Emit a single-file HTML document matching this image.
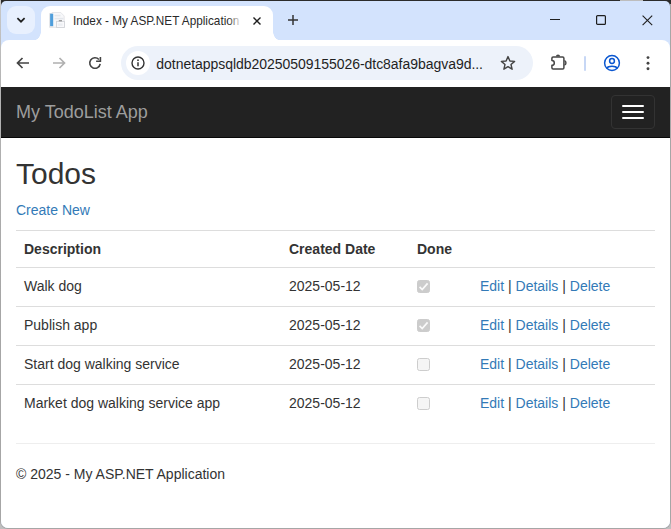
<!DOCTYPE html>
<html>
<head>
<meta charset="utf-8">
<title>Index - My ASP.NET Application</title>
<style>
*{box-sizing:border-box;}
html,body{margin:0;padding:0;}
body{width:671px;height:529px;overflow:hidden;background:#bfbfbf;font-family:"Liberation Sans",sans-serif;position:relative;}
#top{position:absolute;left:1px;top:0;width:670px;height:6px;background:#2b2b2b;}
#top i{position:absolute;left:619px;top:0;width:23px;height:1px;background:#bdbdbd;}
#ring{position:absolute;left:0;top:4px;width:671px;height:525px;border:1px solid #a6a6a6;border-top:0;border-radius:0 0 8px 8px;}
#lcol{position:absolute;left:0;top:0;width:1px;height:300px;background:linear-gradient(#c8c8c8,#b4b4b4 28%,#a6a6a6);}
#win{position:absolute;left:1px;top:1px;width:669px;height:527px;background:#d3e3fd;border-radius:5px 5px 7px 7px;overflow:hidden;}
/* tab strip */
#tabsearch{position:absolute;left:6px;top:5px;width:28px;height:28px;border-radius:9px;background:#e8f0fe;}
#tab{position:absolute;left:40px;top:5px;width:232px;height:35px;background:#fff;border-radius:9px 9px 0 0;}
#tab:before,#tab:after{content:"";position:absolute;bottom:0;width:9px;height:9px;}
#tab:before{left:-9px;background:radial-gradient(circle at 0 0,rgba(255,255,255,0) 8.5px,#fff 9px);}
#tab:after{right:-9px;background:radial-gradient(circle at 100% 0,rgba(255,255,255,0) 8.5px,#fff 9px);}
#tabtitle{position:absolute;left:32px;top:5.5px;width:189px;height:18px;font-size:13.3px;line-height:18px;color:#2a2a2a;white-space:nowrap;overflow:hidden;transform:scaleX(0.885);transform-origin:0 0;}
#tabfade{position:absolute;left:187px;top:5px;width:14px;height:22px;background:linear-gradient(90deg,rgba(255,255,255,0),#fff);}
/* toolbar */
#toolbar{position:absolute;left:0;top:39px;width:669px;height:47px;background:#fff;border-radius:8px 8px 0 0;}
#omni{position:absolute;left:120px;top:6px;width:411.5px;height:34px;border-radius:17px;background:#edf2fa;}
#chip{position:absolute;left:5px;top:5px;width:24px;height:24px;border-radius:12px;background:#fff;}
#url{position:absolute;left:35.3px;top:8.5px;font-size:14px;line-height:18px;color:#1f1f1f;white-space:nowrap;letter-spacing:-0.04px;}
svg{position:absolute;overflow:visible;}
/* page */
#page{position:absolute;left:0;top:86px;width:669px;height:442px;background:#fff;overflow:hidden;font-size:14px;line-height:20px;color:#333;}
#nav{position:absolute;left:0;top:0;width:669px;height:51px;background:#222;border-bottom:1px solid #080808;}
#brand{position:absolute;left:15px;top:15px;font-size:18px;line-height:20px;color:#9d9d9d;white-space:nowrap;}
#toggle{position:absolute;left:610px;top:8px;width:44px;height:34px;border:1px solid #333;border-radius:4px;}
#toggle i{position:absolute;left:10px;width:22px;height:2px;border-radius:1px;background:#fff;}
h2{position:absolute;left:15px;top:70px;margin:0;font-size:30px;line-height:33px;font-weight:normal;color:#333;}
a{color:#337ab7;text-decoration:none;}
#create{position:absolute;left:15px;top:113px;}
table{position:absolute;left:15px;top:143px;width:639px;border-collapse:collapse;border-spacing:0;}
th,td{padding:8px 8px 0 8px;text-align:left;vertical-align:top;border-top:1px solid #ddd;white-space:nowrap;}
th{height:37px;font-weight:bold;}
td{height:39px;}
.cb{display:block;width:13px;height:13px;margin-top:4px;border:1px solid #cdcdcd;border-radius:2.5px;background:#f5f5f5;position:relative;}
.cb.on{background:#cccccc;border-color:#cccccc;}
.cb svg{left:-1px;top:-1px;}
hr{position:absolute;left:15px;top:356px;width:639px;height:0;margin:0;border:0;border-top:1px solid #eee;}
#foot{position:absolute;left:15px;top:377px;}
</style>
</head>
<body>
<div id="top"><i></i></div><div id="ring"></div><div id="lcol"></div>
<div id="win">
  <div id="tabsearch">
    <svg style="left:9px;top:11px" width="10" height="6" viewBox="0 0 10 6"><path d="M1.4 1.2 L5 4.7 L8.6 1.2" fill="none" stroke="#1f1f1f" stroke-width="1.7"/></svg>
  </div>
  <div id="tab">
    <svg style="left:7.1px;top:5px" width="18" height="18" viewBox="0 0 18 18">
      <path d="M1.5 2.5 H4 V1.5 H12.8 L16.2 5 V16.4 H1.5 Z" fill="#f7f8fa" stroke="#dfe1e5" stroke-width="0.8"/>
      <rect x="2.1" y="2.7" width="3.1" height="12.4" fill="#4f9edb"/>
      <rect x="2.1" y="15.1" width="3.1" height="1" fill="#d9dde3"/>
      <rect x="6.5" y="3.8" width="6" height="1.6" fill="#e4e7ec"/>
      <rect x="6.5" y="6.8" width="9" height="1.6" fill="#e4e7ec"/>
      <rect x="8.5" y="10.4" width="8" height="6.1" fill="#f9f9fb" stroke="#d2d4d9" stroke-width="0.9"/>
      <rect x="10.8" y="9.2" width="3.2" height="1.1" fill="#8a8a8a"/>
      <rect x="9.8" y="12.4" width="4.8" height="2.4" fill="#eceef2"/>
    </svg>
    <div id="tabtitle">Index - My ASP.NET Application</div>
    <div id="tabfade"></div>
    <svg style="left:211px;top:10px" width="10" height="10" viewBox="0 0 10 10"><path d="M1.5 1.5 L8.5 8.5 M8.5 1.5 L1.5 8.5" fill="none" stroke="#1f1f1f" stroke-width="1.4"/></svg>
  </div>
  <svg style="left:286px;top:13px" width="12" height="12" viewBox="0 0 12 12"><path d="M6 1 V11 M1 6 H11" fill="none" stroke="#333" stroke-width="1.5"/></svg>
  <!-- window controls -->
  <div style="position:absolute;left:549px;top:18px;width:10px;height:1px;background:#1f1f1f"></div>
  <svg style="left:595px;top:14px" width="10" height="10" viewBox="0 0 10 10"><rect x="0.6" y="0.6" width="8.8" height="8.8" rx="1" fill="none" stroke="#1f1f1f" stroke-width="1.2"/></svg>
  <svg style="left:640.5px;top:14px" width="11" height="11" viewBox="0 0 11 11"><path d="M0.6 0.6 L10.2 10.2 M10.2 0.6 L0.6 10.2" stroke="#1f1f1f" stroke-width="1.1"/></svg>

  <div id="toolbar">
    <!-- back -->
    <svg style="left:15px;top:17px" width="14" height="12" viewBox="0 0 14 12"><path d="M13 6 H2 M6.5 1 L1.5 6 L6.5 11" fill="none" stroke="#444" stroke-width="1.7"/></svg>
    <!-- forward -->
    <svg style="left:51px;top:17px" width="14" height="12" viewBox="0 0 14 12"><path d="M1 6 H12 M7.5 1 L12.5 6 L7.5 11" fill="none" stroke="#b0b0b0" stroke-width="1.7"/></svg>
    <!-- reload -->
    <svg style="left:87px;top:16px" width="14" height="14" viewBox="0 0 14 14"><path d="M12.2 7.8 A5.25 5.25 0 1 1 10.9 3.5" fill="none" stroke="#444" stroke-width="1.6"/><path d="M12.4 0.9 V5.3 H8.1" fill="none" stroke="#444" stroke-width="1.6"/></svg>
    <div id="omni">
      <div id="chip">
        <svg style="left:5px;top:5px" width="14" height="14" viewBox="0 0 14 14"><circle cx="7" cy="7" r="6" fill="none" stroke="#333" stroke-width="1.4"/><path d="M7 6.2 V10.2" stroke="#333" stroke-width="1.5"/><circle cx="7" cy="4.2" r="0.9" fill="#333"/></svg>
      </div>
      <div id="url">dotnetappsqldb20250509155026-dtc8afa9bagva9d...</div>
      <!-- star -->
      <svg style="left:379px;top:9px" width="16" height="16" viewBox="0 0 16 16"><path d="M8 1.6 L9.9 6 L14.6 6.4 L11 9.5 L12.1 14.2 L8 11.7 L3.9 14.2 L5 9.5 L1.4 6.4 L6.1 6 Z" fill="none" stroke="#444" stroke-width="1.4" stroke-linejoin="round"/></svg>
    </div>
    <!-- extensions -->
    <svg style="left:548px;top:12px" width="20" height="20" viewBox="0 0 20 20"><path d="M4.1 5 H13.7 Q14.9 5 14.9 6.2 V15.8 Q14.9 17 13.7 17 H4.1 Q2.9 17 2.9 15.8 V13.3 A2.4 2.4 0 0 0 2.9 8.5 V6.2 Q2.9 5 4.1 5 Z" fill="none" stroke="#474747" stroke-width="1.5" stroke-linejoin="round"/><path d="M6.9 4.6 A2.1 2.1 0 0 1 11.1 4.6 Z" fill="#474747"/><path d="M15.4 8.7 A2.3 2.3 0 0 1 15.4 13.1" fill="#777" stroke="#474747" stroke-width="1.3"/></svg>
    <div style="position:absolute;left:583px;top:15.5px;width:2px;height:15px;background:#c7d7f5;border-radius:1px;"></div>
    <!-- profile -->
    <svg style="left:602px;top:13.8px" width="18" height="18" viewBox="0 0 18 18"><circle cx="9" cy="9" r="7.4" fill="none" stroke="#0b57d0" stroke-width="1.5"/><circle cx="9" cy="7" r="2.4" fill="none" stroke="#0b57d0" stroke-width="1.5"/><path d="M3.6 14.2 C5.5 11.6 12.5 11.6 14.4 14.2" fill="none" stroke="#0b57d0" stroke-width="1.5"/></svg>
    <!-- menu -->
    <svg style="left:645px;top:15.8px" width="4" height="15" viewBox="0 0 4 15"><circle cx="2" cy="1.6" r="1.45" fill="#444"/><circle cx="2" cy="7.2" r="1.45" fill="#444"/><circle cx="2" cy="12.8" r="1.45" fill="#444"/></svg>
  </div>

  <div id="page">
    <div id="nav">
      <div id="brand">My TodoList App</div>
      <div id="toggle"><i style="top:9px"></i><i style="top:15px"></i><i style="top:21px"></i></div>
    </div>
    <h2>Todos</h2>
    <div id="create"><a>Create New</a></div>
    <table>
      <tr><th style="width:265px">Description</th><th style="width:128px">Created Date</th><th style="width:63px">Done</th><th></th></tr>
      <tr><td>Walk dog</td><td>2025-05-12</td><td><span class="cb on"><svg width="13" height="13" viewBox="0 0 13 13"><path d="M2.6 6.9 L5.2 9.5 L10.6 3.4" fill="none" stroke="#fafafa" stroke-width="1.7"/></svg></span></td><td><a>Edit</a> | <a>Details</a> | <a>Delete</a></td></tr>
      <tr><td>Publish app</td><td>2025-05-12</td><td><span class="cb on"><svg width="13" height="13" viewBox="0 0 13 13"><path d="M2.6 6.9 L5.2 9.5 L10.6 3.4" fill="none" stroke="#fafafa" stroke-width="1.7"/></svg></span></td><td><a>Edit</a> | <a>Details</a> | <a>Delete</a></td></tr>
      <tr><td>Start dog walking service</td><td>2025-05-12</td><td><span class="cb"></span></td><td><a>Edit</a> | <a>Details</a> | <a>Delete</a></td></tr>
      <tr><td>Market dog walking service app</td><td>2025-05-12</td><td><span class="cb"></span></td><td><a>Edit</a> | <a>Details</a> | <a>Delete</a></td></tr>
    </table>
    <hr>
    <div id="foot">&copy; 2025 - My ASP.NET Application</div>
  </div>
</div>

</body>
</html>
